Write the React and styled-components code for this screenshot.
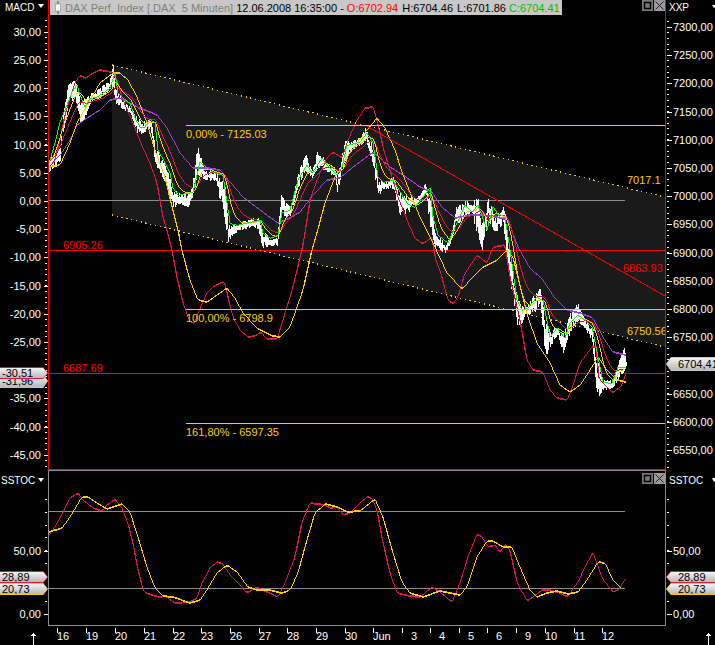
import React from 'react';
import styled, { createGlobalStyle } from 'styled-components';

const GlobalStyle = createGlobalStyle`
  html, body {
    margin: 0;
    padding: 0;
    background: #000;
  }
`;

// colours
const WHITE = '#ffffff';
const RED = '#ff0000';
const CRIMSON = '#e01440';
const AMBER = '#ffcc00';
const GREEN = '#00ff00';
const PURPLE = '#a040d0';
const GRAY = '#8c8c8c';

// data, in page pixels, read off the chart
const fastPoints = [[50,160],[55,143],[60,122],[67,105],[72,92],[77,85],[80,95],[85,107],[90,98],[97,97],[103,93],[110,88],[115,73],[118,93],[123,98],[130,103],[135,118],[140,127],[145,127],[150,119],[155,123],[158,150],[165,163],[170,173],[173,188],[178,195],[187,193],[193,192],[197,175],[200,162],[207,168],[213,172],[223,175],[227,203],[230,223],[237,225],[250,222],[260,220],[263,233],[270,238],[278,235],[282,212],[290,210],[298,180],[307,165],[312,173],[322,158],[327,165],[337,175],[342,167],[347,145],[360,142],[367,133],[373,143],[378,177],[383,182],[393,180],[402,195],[407,203],[415,207],[430,188],[433,217],[438,235],[448,243],[457,223],[465,205],[472,212],[478,205],[487,230],[493,207],[500,217],[505,217],[510,250],[517,300],[522,310],[528,308],[537,297],[543,300],[550,337],[557,328],[565,338],[570,323],[578,315],[585,320],[592,327],[598,357],[603,382],[612,383],[618,367],[626,367]];

const slowPoints = [[49,167],[60,155],[70,140],[77,125],[87,118],[100,110],[110,100],[120,98],[130,103],[140,108],[150,112],[157,115],[167,128],[180,153],[193,168],[207,168],[220,170],[230,182],[243,197],[260,210],[278,223],[290,218],[300,212],[313,195],[327,180],[340,178],[353,167],[373,152],[380,158],[390,167],[403,175],[420,187],[432,192],[442,207],[455,218],[470,215],[483,215],[497,217],[508,220],[518,247],[530,268],[543,280],[555,298],[567,310],[580,313],[593,318],[603,337],[613,352],[626,355]];

const macdPoints = [[49,167],[55,160],[60,140],[65,115],[70,98],[75,83],[80,75],[86,78],[93,73],[100,70],[112,72],[117,80],[123,100],[133,123],[143,148],[150,163],[157,183],[163,217],[167,230],[172,250],[177,277],[183,303],[190,322],[195,323],[198,313],[207,293],[213,287],[222,282],[225,283],[228,297],[233,317],[240,330],[248,337],[255,336],[261,332],[267,339],[277,339],[283,320],[293,287],[302,250],[305,233],[310,200],[317,180],[327,158],[333,152],[342,158],[348,140],[357,120],[365,108],[373,107],[378,123],[383,147],[393,180],[398,197],[407,220],[415,238],[423,244],[432,237],[435,257],[442,277],[448,300],[453,304],[458,297],[465,273],[477,255],[487,263],[493,247],[505,245],[510,277],[517,307],[520,320],[527,360],[533,370],[543,372],[550,390],[557,398],[567,400],[572,388],[580,363],[592,347],[597,347],[598,377],[603,383],[613,393],[622,385],[626,373]];

const signalPoints = [[49,167],[60,165],[70,143],[77,123],[90,100],[100,83],[113,73],[120,73],[128,80],[137,97],[147,123],[155,150],[165,177],[173,210],[178,230],[182,250],[190,280],[198,300],[207,302],[227,288],[235,298],[243,313],[257,328],[273,336],[280,337],[290,327],[303,290],[312,250],[317,233],[325,203],[335,177],[343,163],[357,143],[367,130],[377,118],[385,128],[395,150],[403,175],[412,197],[420,217],[433,243],[447,273],[462,289],[473,277],[483,267],[497,260],[507,250],[513,257],[523,297],[528,317],[537,343],[550,363],[560,385],[570,392],[580,385],[590,370],[598,357],[607,370],[617,380],[626,382]];

// x, high, low of the price bars
const priceBands = [[49,160,172],[55,150,165],[60,148,160],[62,120,137],[68,83,107],[75,80,97],[80,100,122],[83,100,122],[90,93,103],[100,88,97],[110,78,90],[113,65,85],[115,87,103],[125,103,110],[130,107,113],[137,117,132],[143,122,133],[150,117,127],[155,143,163],[160,157,173],[167,167,187],[173,190,207],[180,193,203],[188,193,207],[192,187,197],[195,160,187],[197,145,173],[205,170,180],[215,172,180],[225,183,223],[228,223,243],[235,225,232],[250,218,227],[258,218,228],[262,227,248],[270,240,245],[277,237,245],[281,195,217],[290,207,215],[298,173,187],[305,152,170],[312,170,177],[318,148,167],[325,160,170],[335,167,177],[337,177,193],[345,138,160],[350,142,150],[360,137,145],[365,128,140],[372,143,163],[378,180,195],[385,182,188],[393,177,188],[400,193,217],[410,197,210],[420,195,200],[425,183,193],[430,190,227],[435,233,247],[445,243,253],[450,237,243],[456,207,225],[465,200,217],[470,203,213],[477,192,233],[482,223,250],[488,197,220],[495,217,233],[503,207,223],[506,217,257],[513,273,300],[518,300,330],[525,308,316],[535,293,311],[540,288,302],[545,320,357],[550,330,347],[557,327,334],[563,333,352],[570,313,333],[577,302,323],[585,320,327],[592,327,343],[597,357,400],[603,380,390],[612,380,387],[618,363,380],[624,347,370],[626,358,368]];

const stochRed = [[49,535],[55,527],[63,512],[70,498],[78,493],[83,500],[93,508],[102,511],[107,505],[115,499],[122,508],[128,523],[133,543],[138,570],[144,592],[152,595],[160,597],[165,596],[175,603],[190,602],[197,598],[202,583],[210,568],[217,562],[223,564],[230,575],[238,583],[247,593],[257,587],[267,592],[278,597],[285,583],[295,557],[302,522],[310,503],[325,505],[330,508],[337,507],[343,515],[350,513],[360,503],[367,497],[372,498],[377,510],[382,537],[390,573],[397,593],[410,596],[420,597],[432,587],[440,592],[452,602],[460,583],[468,557],[477,534],[482,537],[488,547],[495,545],[500,552],[506,544],[510,550],[517,582],[527,601],[533,597],[542,590],[550,590],[560,593],[567,597],[578,582],[585,567],[593,552],[602,578],[613,592],[618,590],[626,578]];

const stochAmber = [[49,532],[62,528],[70,517],[82,497],[88,497],[97,503],[107,509],[113,507],[122,504],[130,512],[138,537],[147,567],[155,588],[163,596],[173,597],[190,603],[200,600],[208,588],[217,573],[227,565],[237,572],[248,587],[257,590],[270,590],[282,593],[290,590],[298,573],[307,540],[315,513],[325,504],[338,507],[347,512],[360,511],[375,499],[383,517],[393,553],[402,582],[410,593],[423,597],[440,591],[450,593],[460,595],[467,587],[477,557],[487,541],[493,541],[503,547],[512,547],[520,567],[530,590],[537,597],[547,593],[557,591],[568,594],[578,592],[587,580],[598,562],[605,563],[613,580],[621,588]];

// x of each date tick on the time axis
const dates = [
  ['16', 57], ['19', 86], ['20', 115], ['21', 144], ['22', 173], ['23', 201],
  ['26', 230], ['27', 259], ['28', 287], ['29', 316], ['30', 345], ['Jun', 373],
  ['3', 402], ['4', 430], ['5', 459], ['6', 487], ['9', 516], ['10', 545],
  ['11', 574], ['12', 602],
];

const noise = (n) => {
  const v = Math.sin(n * 12.9898) * 43758.5453;
  return v - Math.floor(v);
};

const valueAt = (points, x, col = 1) => {
  if (x <= points[0][0]) return points[0][col];
  for (let i = 1; i < points.length; i++) {
    if (x <= points[i][0]) {
      const a = points[i - 1];
      const b = points[i];
      return a[col] + ((b[col] - a[col]) * (x - a[0])) / (b[0] - a[0]);
    }
  }
  return points[points.length - 1][col];
};

// resample to whole pixels, with a small box smooth
const resample = (points, radius = 1) => {
  const first = points[0][0];
  const last = points[points.length - 1][0];
  const out = [];
  for (let x = first; x <= last; x++) {
    let sum = 0;
    let count = 0;
    for (let d = -radius; d <= radius; d++) {
      sum += valueAt(points, x + d);
      count++;
    }
    out.push([x, sum / count]);
  }
  return out;
};

// the two short averages trail the fast line
const lagged = (points, alpha) => {
  const base = resample(points, 0);
  let y = base[0][1];
  return base.map(([x, v]) => {
    y += (v - y) * alpha;
    return [x, y];
  });
};

const toLine = (points) =>
  points.map(([x, y]) => `${x},${Math.round(y)}`).join(' ');

const priceBars = () => {
  let d = '';
  for (let x = 49; x <= 626; x++) {
    const high = valueAt(priceBands, x, 1);
    const low = valueAt(priceBands, x, 2);
    const span = low - high;
    const top = high + noise(x) * noise(x) * span * 0.45;
    const bottom = low - noise(x + 700) * noise(x + 700) * span * 0.45;
    d += `M${x + 0.5} ${Math.round(top)}V${Math.round(bottom) + 1}`;
  }
  return d;
};

const ticks = (from, to, step, x, len) => {
  let d = '';
  for (let y = from; y <= to; y += step) {
    d += `M${x} ${Math.round(y) + 0.5}h${len}`;
  }
  return d;
};

// layout
const Page = styled.div`
  width: 715px;
  height: 645px;
  background: #000;
  overflow: hidden;
  display: flex;
  flex-direction: column;
  font-family: 'Liberation Sans', Arial, sans-serif;
`;

const PanelRow = styled.div`
  display: grid;
  grid-template-columns: 48px 618px 49px;
  height: ${(p) => p.$height}px;
`;

const AxisColumn = styled.div`
  position: relative;
  overflow: hidden;
`;

const ChartFrame = styled.div`
  position: relative;
  box-sizing: border-box;
  border: 1px solid ${(p) => p.$color};
  border-top: ${(p) => (p.$open ? 'none' : `1px solid ${p.$color}`)};
`;

const Canvas = styled.svg`
  display: block;
`;

const InfoBar = styled.div`
  position: absolute;
  top: 0;
  left: 1px;
  width: 512px;
  height: 15px;
  background: #c8c8c8;
  display: flex;
  align-items: center;
  font-size: 11px;
  white-space: pre;
`;

const CandleIcon = styled.svg`
  width: 8px;
  height: 13px;
  margin: 0 3px 0 4px;
  flex: none;
`;

const InfoText = styled.span`
  color: ${(p) => p.$color};
  margin-right: ${(p) => p.$gap || 0}px;
`;

const WindowButtons = styled.div`
  position: absolute;
  top: ${(p) => p.$top}px;
  right: 0;
  display: flex;
  gap: 1px;
`;

const WindowButton = styled.svg`
  width: 11px;
  height: 11px;
  background: ${(p) => p.$bg};
  display: block;
`;

const TimeRow = styled.div`
  flex: 1;
  min-height: 0;
`;

// price flags on the axes
const Flag = styled.div`
  position: absolute;
  top: ${(p) => p.$top}px;
  left: 0;
  right: 0;
  height: ${(p) => p.$height}px;
  background: ${(p) => p.$tone};
  padding: 1px 0;
  box-sizing: border-box;
  clip-path: ${(p) =>
    p.$side === 'left'
      ? 'polygon(0 0, 90% 0, 100% 50%, 90% 100%, 0 100%)'
      : 'polygon(10% 0, 100% 0, 100% 100%, 10% 100%, 0 50%)'};
`;

const FlagFace = styled.div`
  height: 100%;
  background: linear-gradient(#f4f4f4, #b8b8b8);
  color: #000;
  font-size: 11px;
  line-height: ${(p) => p.$height - 2}px;
  white-space: nowrap;
  overflow: hidden;
  padding-left: ${(p) => (p.$side === 'left' ? 2 : 12)}px;
  clip-path: ${(p) =>
    p.$side === 'left'
      ? 'polygon(0 0, 90% 0, 99% 50%, 90% 100%, 0 100%)'
      : 'polygon(10% 0, 100% 0, 100% 100%, 10% 100%, 1% 50%)'};
`;

// svg parts
const AxisLabel = styled.text`
  font-family: 'Liberation Sans', Arial, sans-serif;
  font-size: 11px;
  fill: ${WHITE};
  text-anchor: ${(p) => p.$anchor || 'start'};
`;

const PanelTitle = styled.text`
  font-family: 'Liberation Sans', Arial, sans-serif;
  font-size: 10px;
  fill: ${WHITE};
`;

const ChartLabel = styled.text`
  font-family: 'Liberation Sans', Arial, sans-serif;
  font-size: 11px;
  fill: ${(p) => p.$color};
`;

const TickPath = styled.path`
  stroke: ${WHITE};
  stroke-width: 1;
  fill: none;
  shape-rendering: crispEdges;
`;

const Series = styled.polyline`
  fill: none;
  stroke: ${(p) => p.$color};
  stroke-width: ${(p) => p.$width || 1.2};
  shape-rendering: crispEdges;
`;

const HLine = styled.line`
  stroke: ${(p) => p.$color};
  stroke-width: 1;
  shape-rendering: crispEdges;
`;

const DottedLine = styled.line`
  stroke: #e8c820;
  stroke-width: 1.2;
  stroke-dasharray: 1.3 3.6;
  shape-rendering: crispEdges;
`;

const TrendLine = styled.line`
  stroke: ${RED};
  stroke-width: 1;
  shape-rendering: crispEdges;
`;

const ChannelFill = styled.polygon`
  fill: #1a1a1a;
`;

const PriceBars = styled.path`
  stroke: ${WHITE};
  stroke-width: 1;
  fill: none;
  shape-rendering: crispEdges;
`;

const DropMark = styled.polygon`
  fill: ${WHITE};
`;

const ArrowMark = styled.path`
  stroke: ${WHITE};
  stroke-width: 1;
  fill: none;
  shape-rendering: crispEdges;
`;

const macdValues = [30, 25, 20, 15, 10, 5, 0, -5, -10, -15, -20, -25, -35, -40, -45];
const priceValues = [7300, 7250, 7200, 7150, 7100, 7050, 7000, 6950, 6900, 6850, 6800, 6750, 6650, 6600, 6550];

const macdY = (v) => 200.9 - 5.64 * v;
const priceY = (v) => 27 + (7300 - v) * 0.564;
const comma = (v) => v.toFixed(2).replace('.', ',');

const ButtonPair = ({ top }) => (
  <WindowButtons $top={top}>
    <WindowButton $bg="#787878" viewBox="0 0 11 11">
      <rect x="2.5" y="2.5" width="6" height="6" fill="none" stroke="#000" strokeWidth="1.5" />
    </WindowButton>
    <WindowButton $bg="#9a9a9a" viewBox="0 0 11 11">
      <path d="M1.5 1.5L9.5 9.5M9.5 1.5L1.5 9.5" stroke="#222" strokeWidth="1" />
    </WindowButton>
  </WindowButtons>
);

const PriceFlag = ({ side, tone, top, height, children }) => (
  <Flag $side={side} $tone={tone} $top={top} $height={height}>
    <FlagFace $side={side} $height={height}>{children}</FlagFace>
  </Flag>
);

const MainPanel = () => (
  <PanelRow $height={470}>
    <AxisColumn>
      <Canvas width="48" height="470" viewBox="0 0 48 470">
        <PanelTitle x="5" y="11">MACD</PanelTitle>
        <DropMark points="38,4 44,4 41,8" />
        <TickPath d={ticks(20.4, 467, 5.64, 45, 2)} />
        <TickPath d={macdValues.map((v) => `M44 ${Math.round(macdY(v)) + 0.5}h4`).join('')} />
        {macdValues.map((v) => (
          <AxisLabel key={v} x="41" y={Math.round(macdY(v)) + 4} $anchor="end">{comma(v)}</AxisLabel>
        ))}
      </Canvas>
      <PriceFlag side="left" tone={AMBER} top={374} height={14}>-31,96</PriceFlag>
      <PriceFlag side="left" tone={CRIMSON} top={367} height={12}>-30,51</PriceFlag>
    </AxisColumn>

    <ChartFrame $color={RED} $open>
      <Canvas width="616" height="469" viewBox="49 0 616 469">
        <ChannelFill points="112,65 665,197 665,347 112,215" />
        <HLine x1="49" x2="625" y1="200.5" y2="200.5" $color={GRAY} />
        <HLine x1="49" x2="665" y1="250.5" y2="250.5" $color={RED} />
        <HLine x1="49" x2="665" y1="373.5" y2="373.5" $color={RED} />
        <PriceBars d={priceBars()} />
        <Series points={toLine(resample(slowPoints))} $color={PURPLE} />
        <Series points={toLine(resample(macdPoints))} $color={CRIMSON} />
        <Series points={toLine(resample(signalPoints))} $color={AMBER} />
        <Series points={toLine(lagged(fastPoints, 0.09))} $color={CRIMSON} $width={1} />
        <Series points={toLine(lagged(fastPoints, 0.18))} $color={AMBER} $width={1} />
        <Series points={toLine(resample(fastPoints, 0))} $color={GREEN} $width={1} />
        <DottedLine x1="112" y1="65" x2="665" y2="197" />
        <DottedLine x1="112" y1="215" x2="665" y2="347" />
        <TrendLine x1="365" y1="125" x2="665" y2="296" />
        <HLine x1="186" x2="665" y1="125.5" y2="125.5" $color={AMBER} />
        <HLine x1="186" x2="665" y1="309.5" y2="309.5" $color={AMBER} />
        <HLine x1="186" x2="665" y1="423.5" y2="423.5" $color={AMBER} />
        <ChartLabel x="186" y="138" $color={AMBER}>0,00% - 7125.03</ChartLabel>
        <ChartLabel x="186" y="322" $color={AMBER}>100,00% - 6798.9</ChartLabel>
        <ChartLabel x="186" y="436" $color={AMBER}>161,80% - 6597.35</ChartLabel>
        <ChartLabel x="63" y="249" $color={RED}>6905.26</ChartLabel>
        <ChartLabel x="63" y="372" $color={RED}>6687.69</ChartLabel>
        <ChartLabel x="627" y="184" $color={AMBER}>7017.1</ChartLabel>
        <ChartLabel x="623" y="272" $color={RED}>6863.93</ChartLabel>
        <ChartLabel x="627" y="335" $color={AMBER}>6750.56</ChartLabel>
      </Canvas>
      <InfoBar>
        <CandleIcon viewBox="0 0 8 13">
          <path d="M4 0V13" stroke="#555" strokeWidth="1" />
          <rect x="1.5" y="3" width="5" height="7" fill="#fff" stroke="#777" strokeWidth="0.5" />
        </CandleIcon>
        <InfoText $color="#808080" $gap={3}>{'DAX Perf. Index [.DAX  5 Minuten]'}</InfoText>
        <InfoText $color="#000">12.06.2008 16:35:00 - </InfoText>
        <InfoText $color={RED} $gap={4}>O:6702.94</InfoText>
        <InfoText $color="#000" $gap={4}>H:6704.46</InfoText>
        <InfoText $color="#000" $gap={3}>L:6701.86</InfoText>
        <InfoText $color="#00c000">C:6704.41</InfoText>
      </InfoBar>
      <ButtonPair top={0} />
    </ChartFrame>

    <AxisColumn>
      <Canvas width="49" height="470" viewBox="666 0 49 470">
        <PanelTitle x="669" y="11">XXP</PanelTitle>
        <DropMark points="712,5 717,5 714,8" />
        <TickPath d={ticks(21, 467, 5.64, 667, 2)} />
        <TickPath d={priceValues.map((v) => `M667 ${Math.round(priceY(v)) + 0.5}h5`).join('')} />
        {priceValues.map((v) => (
          <AxisLabel key={v} x="673" y={Math.round(priceY(v)) + 4}>{comma(v)}</AxisLabel>
        ))}
      </Canvas>
      <PriceFlag side="right" tone="#c8c8c8" top={357} height={14}>6704,41</PriceFlag>
    </AxisColumn>
  </PanelRow>
);

const SubPanel = () => (
  <PanelRow $height={156}>
    <AxisColumn>
      <Canvas width="48" height="156" viewBox="0 470 48 156">
        <PanelTitle x="1" y="484">SSTOC</PanelTitle>
        <DropMark points="38,478 44,478 41,482" />
        <TickPath d={ticks(499, 614, 12.75, 45, 2)} />
        <TickPath d="M44 551.5h4M44 614.5h4" />
        <AxisLabel x="41" y="555" $anchor="end">50,00</AxisLabel>
        <AxisLabel x="41" y="618" $anchor="end">0,00</AxisLabel>
      </Canvas>
      <PriceFlag side="left" tone={AMBER} top={113} height={12}>20,73</PriceFlag>
      <PriceFlag side="left" tone={CRIMSON} top={101} height={12}>28,89</PriceFlag>
    </AxisColumn>

    <ChartFrame $color={GRAY}>
      <Canvas width="616" height="154" viewBox="49 471 616 154">
        <HLine x1="49" x2="625" y1="511.5" y2="511.5" $color={GRAY} />
        <HLine x1="49" x2="625" y1="588.5" y2="588.5" $color={GRAY} />
        <Series points={toLine(resample(stochRed))} $color={CRIMSON} />
        <Series points={toLine(resample(stochAmber))} $color={AMBER} />
      </Canvas>
      <ButtonPair top={2} />
    </ChartFrame>

    <AxisColumn>
      <Canvas width="49" height="156" viewBox="666 470 49 156">
        <PanelTitle x="669" y="484">SSTOC</PanelTitle>
        <DropMark points="712,478 717,478 714,482" />
        <TickPath d={ticks(499, 614, 12.75, 667, 2)} />
        <TickPath d="M667 551.5h5M667 614.5h5" />
        <AxisLabel x="673" y="555">50,00</AxisLabel>
        <AxisLabel x="673" y="618">0,00</AxisLabel>
      </Canvas>
      <PriceFlag side="right" tone={AMBER} top={113} height={12}>20,73</PriceFlag>
      <PriceFlag side="right" tone={CRIMSON} top={101} height={12}>28,89</PriceFlag>
    </AxisColumn>
  </PanelRow>
);

const TimeAxis = () => (
  <TimeRow>
    <Canvas width="715" height="19" viewBox="0 626 715 19">
      <TickPath d={dates.map(([, x]) => `M${x + 0.5} 628v5`).join('')} />
      {dates.map(([label, x]) =>
        label.length === 1 ? (
          <AxisLabel key={label} x={x + 15} y="640" $anchor="end">{label}</AxisLabel>
        ) : (
          <AxisLabel key={label} x={x} y="640">{label}</AxisLabel>
        )
      )}
      <ArrowMark d="M33.5 633V645M31.5 636L33.5 633.5L35.5 636" />
      <ArrowMark d="M708.5 633V645M706.5 636L708.5 633.5L710.5 636" />
    </Canvas>
  </TimeRow>
);

const App = () => (
  <Page>
    <GlobalStyle />
    <MainPanel />
    <SubPanel />
    <TimeAxis />
  </Page>
);

export default App;
